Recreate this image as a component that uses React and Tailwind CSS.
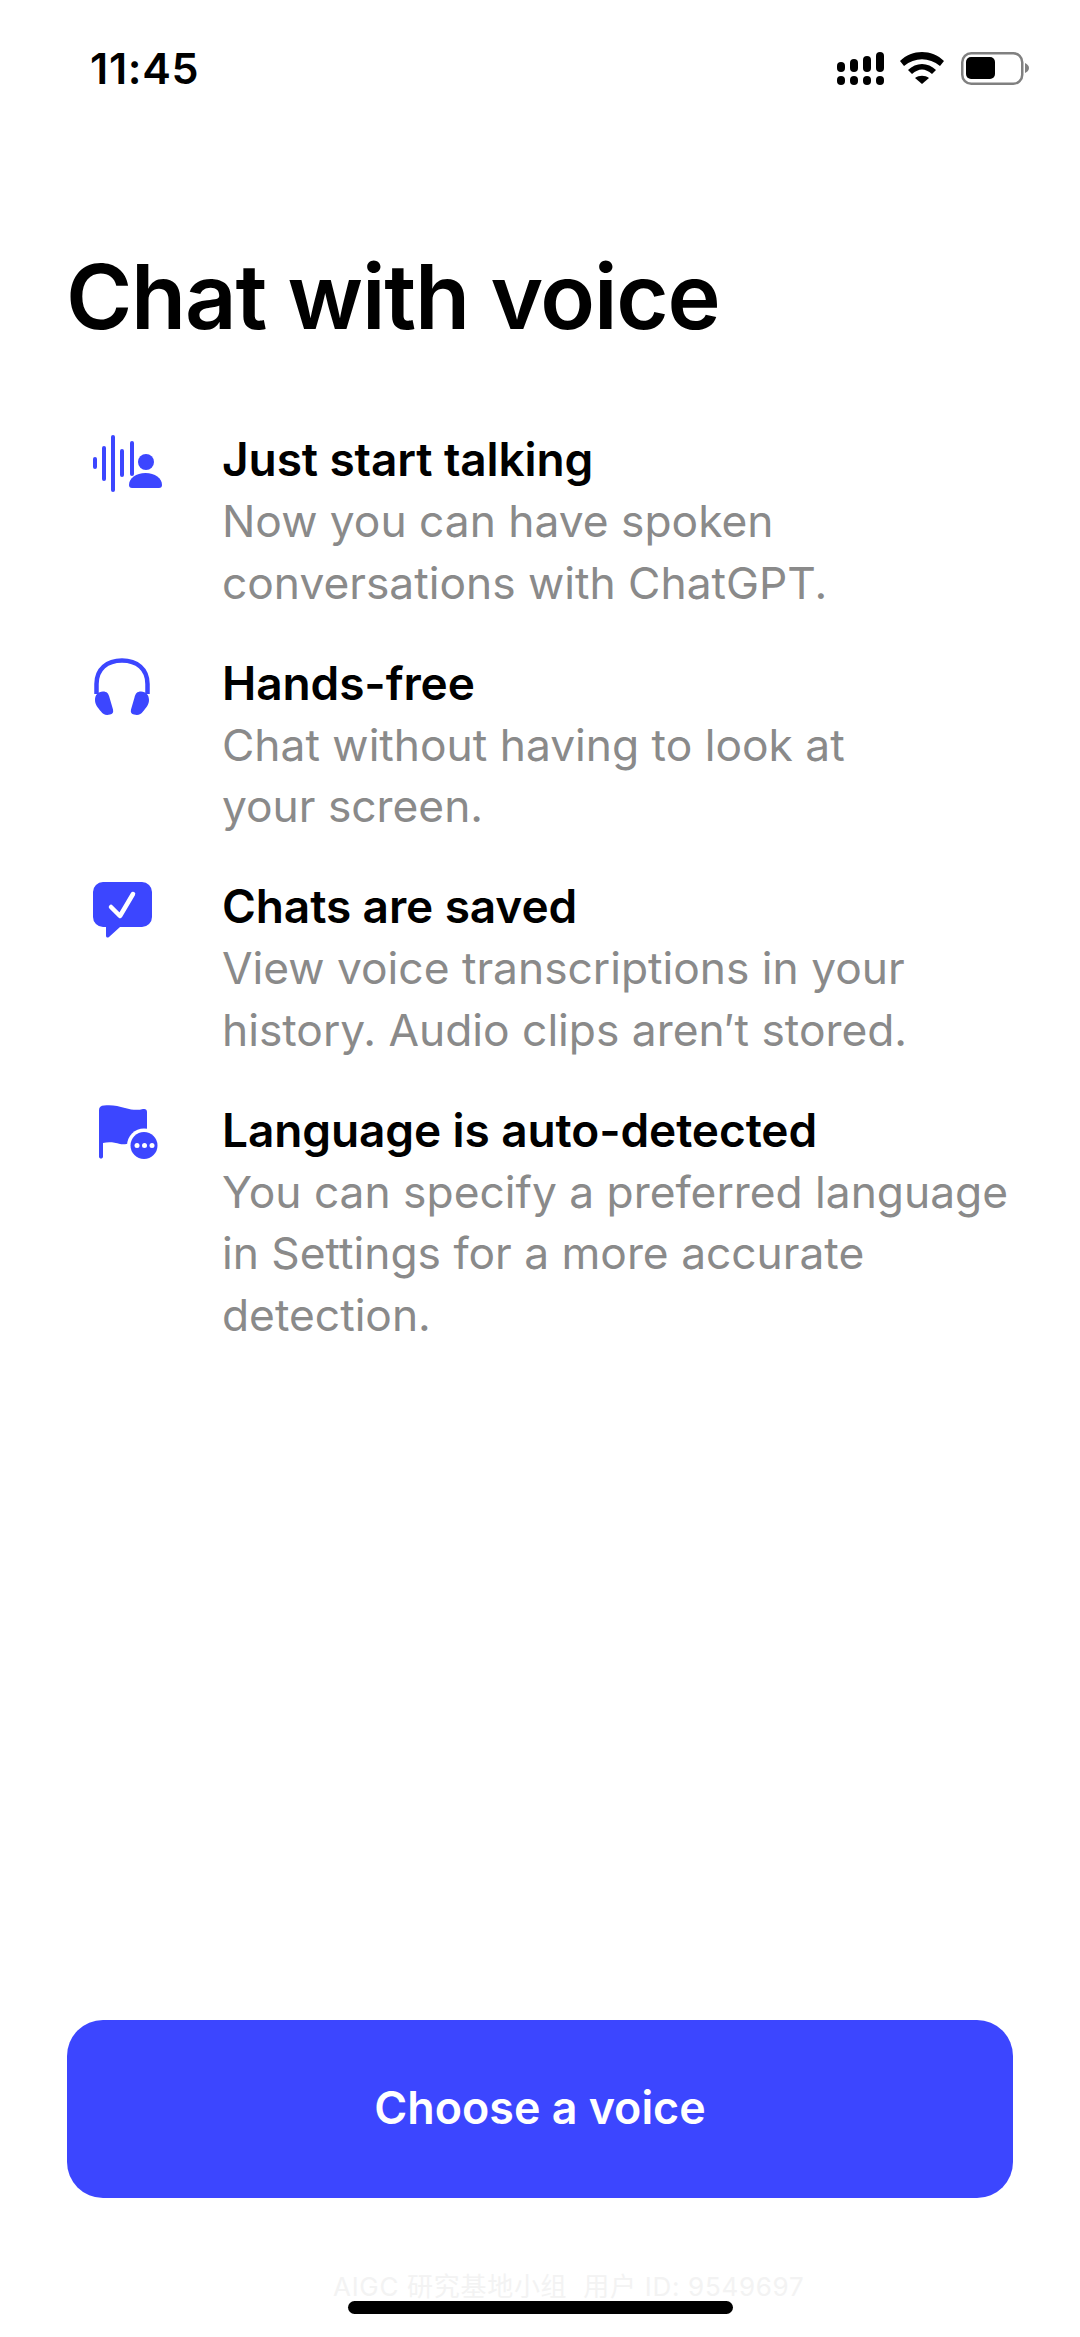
const BLUE = "#3c46ff"

function VoiceIcon() {
  return (
    <svg width="76" height="64" viewBox="0 0 76 64" fill="none">
      <g stroke={BLUE} strokeWidth="4" strokeLinecap="round">
        <path d="M5 27v8" />
        <path d="M14 16v31" />
        <path d="M23 5v53" />
        <path d="M32 19v24" />
        <path d="M42 11v31" />
      </g>
      <circle cx="56" cy="30" r="8" fill={BLUE} />
      <path d="M39 53c0-7 7-12 16.5-12s16.5 5 16.5 12c0 2-1 3-3 3H42c-2 0-3-1-3-3z" fill={BLUE} />
    </svg>
  )
}

function HeadphonesIcon() {
  return (
    <svg width="76" height="64" viewBox="0 0 76 64" fill="none">
      <path d="M6.5 38V28C6.5 13 17 4.5 32 4.5S57.5 13 57.5 28V38" stroke={BLUE} strokeWidth="4.5" />
      <path d="M5 44c0-5 3-8.500 8-8.500 4 0 5.500 2 6.500 6l3.500 12c.7 3-.5 4.500-3 5-4 1-7 0-9-3-3-3.500-6-7-6-11.500z" fill={BLUE} />
      <path d="M59 44c0-5-3-8.500-8-8.500-4 0-5.500 2-6.500 6l-3.500 12c-.7 3 .5 4.500 3 5 4 1 7 0 9-3 3-3.500 6-7 6-11.500z" fill={BLUE} />
    </svg>
  )
}

function CheckBubbleIcon() {
  return (
    <svg width="76" height="64" viewBox="0 0 76 64" fill="none">
      <path d="M13 3h39a10 10 0 0 1 10 10v25a10 10 0 0 1-10 10H30L19 58c-1.500 1.200-3 .5-3-1.500V48h-3A10 10 0 0 1 3 38V13A10 10 0 0 1 13 3z" fill={BLUE} />
      <path d="M21 28l9 9 13-22" stroke="#fff" strokeWidth="4.5" strokeLinecap="round" strokeLinejoin="round" />
    </svg>
  )
}

function FlagIcon() {
  return (
    <svg width="76" height="64" viewBox="0 0 76 64" fill="none">
      <path d="M9 7C9 4 11 2.500 14 2.500 22 1.500 28 3 35 5 42 7 48 7.500 53 6 55.500 5.500 57 6.500 57 9V35C45 40 35 42 30 41 24 39 18 38.500 13 40V53.500C13 55 12 55.500 11 55.500S9 55 9 53.500Z" fill={BLUE} />
      <circle cx="54" cy="42.5" r="17" fill="#fff" />
      <circle cx="54" cy="42.5" r="13.5" fill={BLUE} />
      <circle cx="47" cy="42.5" r="2.5" fill="#fff" />
      <circle cx="54.5" cy="42.5" r="2.5" fill="#fff" />
      <circle cx="62" cy="42.5" r="2.5" fill="#fff" />
    </svg>
  )
}

function SignalIcon() {
  return (
    <svg width="47" height="33" viewBox="0 0 47 33" fill="#000">
      <rect x="0" y="10" width="8" height="10" rx="4" />
      <rect x="13" y="7" width="8" height="13" rx="4" />
      <rect x="26" y="4" width="8" height="16" rx="4" />
      <rect x="39" y="0" width="8" height="20" rx="4" />
      <rect x="0" y="24" width="8" height="9" rx="4" />
      <rect x="13" y="24" width="8" height="9" rx="4" />
      <rect x="26" y="24" width="8" height="9" rx="4" />
      <rect x="39" y="24" width="8" height="9" rx="4" />
    </svg>
  )
}

function WifiIcon() {
  return (
    <svg width="46" height="33" viewBox="0 0 46 33" fill="#000">
      <path d="M1 9C13-3 33-3 45 9L41 14C30 5 16 5 5 14Z" />
      <path d="M9 18C17 10 29 10 37 18L33 22C26 16 20 16 13 22Z" />
      <path d="M16 26C20 23 26 23 30 26L23 32Z" />
    </svg>
  )
}

function BatteryIcon() {
  return (
    <svg width="68" height="33" viewBox="0 0 68 33" fill="none">
      <rect x="1.25" y="1.25" width="60" height="30.5" rx="9" stroke="#808080" strokeWidth="2.5" />
      <rect x="5" y="5" width="29" height="22" rx="5" fill="#000" />
      <path d="M64 11c2.500 1 4 3 4 5s-1.500 4-4 5z" fill="#808080" />
    </svg>
  )
}

const FEATURES = [
  { title: "Just start talking", icon: <VoiceIcon />, lines: ["Now you can have spoken", "conversations with ChatGPT."] },
  { title: "Hands-free", icon: <HeadphonesIcon />, lines: ["Chat without having to look at", "your screen."] },
  { title: "Chats are saved", icon: <CheckBubbleIcon />, lines: ["View voice transcriptions in your", "history. Audio clips aren′t stored."] },
  { title: "Language is auto-detected", icon: <FlagIcon />, lines: ["You can specify a preferred language", "in Settings for a more accurate", "detection."] },
]

export default function App() {
  return (
    <div className="w-[1080px] h-[2337px] bg-white flex flex-col overflow-hidden font-['Inter','Noto_Sans_CJK_SC',sans-serif]">
      <div className="flex items-center justify-between pl-[90px] pr-[51px] pt-[44px] h-[92px]">
        <span className="text-[43px] font-semibold text-black leading-none tracking-[0.7px]">11:45</span>
        <div className="flex items-center">
          <SignalIcon />
          <div className="ml-[15px]"><WifiIcon /></div>
          <div className="ml-[16px]"><BatteryIcon /></div>
        </div>
      </div>

      <h1 className="mt-[150px] ml-[66px] text-[90px] leading-[110px] font-semibold text-black tracking-[-1.2px]">
        Chat with voice
      </h1>

      <div className="mt-[76px] flex flex-col gap-[37.5px]">
        {FEATURES.map((f) => (
          <div key={f.title} className="flex">
            <div className="w-[222px] pl-[90px] pt-[4px] shrink-0">{f.icon}</div>
            <div>
              <div className="text-[46px] leading-[63px] font-semibold text-black tracking-[-0.1px]">{f.title}</div>
              {f.lines.map((l) => (
                <div key={l} className="text-[44.3px] leading-[61.5px] text-[#8a8a8a]">{l}</div>
              ))}
            </div>
          </div>
        ))}
      </div>

      <button className="mt-auto mb-[139px] mx-[67px] h-[178px] rounded-[36px] bg-[#3c46ff] text-white text-[44.8px] font-semibold">
        Choose a voice
      </button>

      <div className="relative">
        <div className="absolute left-[333px] bottom-[31px] whitespace-nowrap text-[26px] text-[#f3f3f3] tracking-[0.7px]">
          AIGC 研究基地小组 &nbsp;用户 ID: 9549697
        </div>
        <div className="absolute left-[348px] bottom-[23px] w-[385px] h-[13px] rounded-full bg-black" />
      </div>
    </div>
  )
}
